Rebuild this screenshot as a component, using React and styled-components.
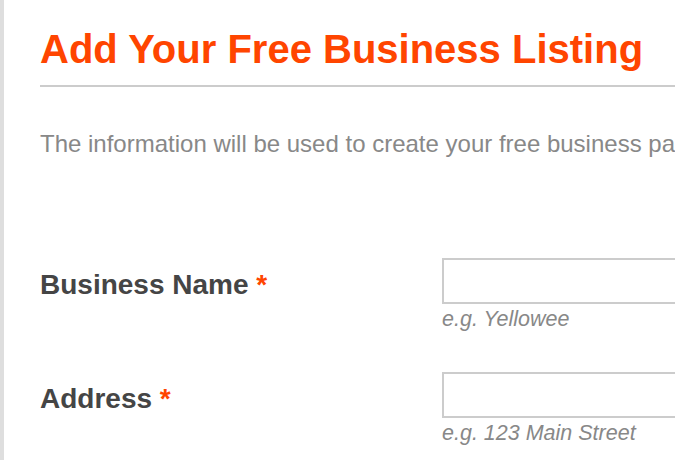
import React from 'react';
import styled, { createGlobalStyle } from 'styled-components';

const GlobalStyle = createGlobalStyle`
  html, body {
    margin: 0;
    padding: 0;
    background: #fff;
  }
  body {
    font-family: "Liberation Sans", Arial, Helvetica, sans-serif;
    overflow: hidden;
  }
`;

const Page = styled.div`
  display: flex;
  width: 675px;
  height: 460px;
  overflow: hidden;
  border-left: 4px solid #dedede;
  box-sizing: border-box;
`;

const Content = styled.div`
  padding-left: 36px;
  flex: 1;
  min-width: 0;
  white-space: nowrap;
`;

const Title = styled.h1`
  margin: 0;
  padding-top: 26px;
  padding-bottom: 13px;
  font-size: 40px;
  line-height: 46px;
  font-weight: bold;
  color: #ff4500;
  border-bottom: 2px solid #cccccc;
  width: 700px;
`;

const Intro = styled.p`
  margin: 43px 0 0;
  font-size: 24px;
  line-height: 28px;
  color: #888888;
`;

const Form = styled.div`
  margin-top: 100px;
  display: flex;
  flex-direction: column;
  gap: 41px;
`;

const Row = styled.div`
  display: grid;
  grid-template-columns: 402px 320px;
`;

const Label = styled.label`
  padding-top: 4px;
  font-size: 28px;
  line-height: 46px;
  font-weight: bold;
  color: #454545;
`;

const Req = styled.span`
  color: #ff4500;
`;

const Field = styled.div`
  display: flex;
  flex-direction: column;
`;

const Input = styled.input`
  box-sizing: border-box;
  width: 320px;
  height: 46px;
  margin: 0;
  border: 2px solid #cccccc;
  outline: none;
  font-family: inherit;
  font-size: 20px;
`;

const Hint = styled.span`
  margin-top: 4px;
  font-size: 21.5px;
  line-height: 23px;
  font-style: italic;
  color: #888888;
`;

const fields = [
  { label: 'Business Name', hint: 'e.g. Yellowee' },
  { label: 'Address', hint: 'e.g. 123 Main Street' },
];

const App = () => {
  return (
    <Page>
      <GlobalStyle />
      <Content>
        <Title>Add Your Free Business Listing</Title>
        <Intro>The information will be used to create your free business page on Yellowee.</Intro>
        <Form>
          {fields.map((f) => (
            <Row key={f.label}>
              <Label>
                {f.label} <Req>*</Req>
              </Label>
              <Field>
                <Input type='text' />
                <Hint>{f.hint}</Hint>
              </Field>
            </Row>
          ))}
        </Form>
      </Content>
    </Page>
  );
};

export default App;
